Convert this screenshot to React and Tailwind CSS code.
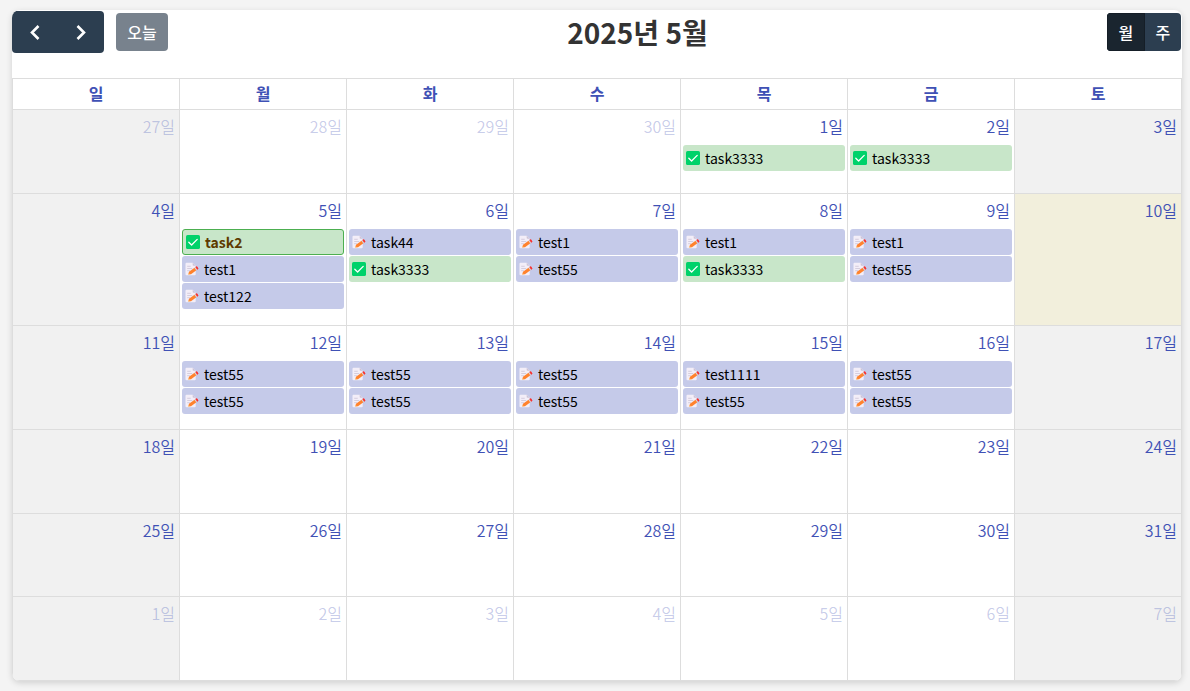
import React from "react";

const DAYS = ["일", "월", "화", "수", "목", "금", "토"];

const todo = (title) => ({ title, done: false });
const done = (title) => ({ title, done: true });

const WEEKS = [
  [
    { d: 27, other: true },
    { d: 28, other: true },
    { d: 29, other: true },
    { d: 30, other: true },
    { d: 1, events: [done("task3333")] },
    { d: 2, events: [done("task3333")] },
    { d: 3 },
  ],
  [
    { d: 4 },
    { d: 5, events: [{ title: "task2", done: true, selected: true }, todo("test1"), todo("test122")] },
    { d: 6, events: [todo("task44"), done("task3333")] },
    { d: 7, events: [todo("test1"), todo("test55")] },
    { d: 8, events: [todo("test1"), done("task3333")] },
    { d: 9, events: [todo("test1"), todo("test55")] },
    { d: 10, today: true },
  ],
  [
    { d: 11 },
    { d: 12, events: [todo("test55"), todo("test55")] },
    { d: 13, events: [todo("test55"), todo("test55")] },
    { d: 14, events: [todo("test55"), todo("test55")] },
    { d: 15, events: [todo("test1111"), todo("test55")] },
    { d: 16, events: [todo("test55"), todo("test55")] },
    { d: 17 },
  ],
  [18, 19, 20, 21, 22, 23, 24].map((d) => ({ d })),
  [25, 26, 27, 28, 29, 30, 31].map((d) => ({ d })),
  [1, 2, 3, 4, 5, 6, 7].map((d) => ({ d, other: true })),
];

function CheckIcon() {
  return (
    <svg viewBox="0 0 14 14" className="size-3.5 shrink-0" aria-hidden="true">
      <rect width="14" height="14" rx="1.6" fill="#00d26a" />
      <path d="M2.800 7.200 5.600 10 11.200 4.400" fill="none" stroke="#fff" strokeWidth="1.3" strokeLinecap="round" strokeLinejoin="round" />
    </svg>
  );
}

function MemoIcon() {
  return (
    <svg viewBox="0 0 14 14" className="size-3.5 shrink-0" aria-hidden="true">
      <path d="M1.500.8h6.200l3 3v8.400a1 1 0 0 1-1 1H1.500a1 1 0 0 1-1-1V1.800a1 1 0 0 1 1-1Z" fill="#f3eef8" />
      <path d="M7.700.8l3 3h-2.200a.8.8 0 0 1-.8-.8Z" fill="#cdc4d6" />
      <path d="M2.200 4.300h3.500M2.200 6.500h5M2.200 8.700h3" stroke="#cdc4d6" strokeWidth=".8" />
      <path d="M3.200 12.500 4 9.800 9.500 5.700 11.400 8.300 6 12.200Z" fill="#ff822d" />
      <path d="M3.200 12.500 3.700 10.900 4.900 12.400Z" fill="#ffce7c" />
      <path d="M9.500 5.700 10.300 5.100 12.200 7.700 11.400 8.300Z" fill="#d3d3d3" />
      <path d="M10.300 5.100 11 4.600a1 1 0 0 1 1.400.2l.8 1.100a1 1 0 0 1-.2 1.400L12.200 7.700Z" fill="#f8312f" />
    </svg>
  );
}

function Event({ event }) {
  const tone = event.selected
    ? "border border-[#4caf50] bg-[#c8e6c9] font-bold text-[#5d3a00]"
    : event.done
      ? "bg-[#c8e6c9] text-black"
      : "bg-[#c5cae9] text-black";
  return (
    <li className={`flex h-[26px] items-center gap-[5px] overflow-hidden rounded-[3px] px-[3px] text-sm leading-4 whitespace-nowrap ${tone}`}>
      {event.done ? <CheckIcon /> : <MemoIcon />}
      <span>{event.title}</span>
    </li>
  );
}

function DayCell({ day, weekend }) {
  const bg = day.today ? "bg-[#f2efdc]" : weekend ? "bg-[#f1f1f1]" : "bg-white";
  return (
    <td className={`h-[83px] border border-[#dddddd] p-0 align-top ${bg}`}>
      <div className="flex h-[35px] justify-end px-1 pt-1">
        <a href="#day" className={`text-base font-[350] ${day.other ? "text-[#3f51b5]/30" : "text-[#3f51b5]"}`}>
          {day.d}일
        </a>
      </div>
      {day.events && (
        <ul className="flex flex-col gap-px px-0.5 pb-[15px]">
          {day.events.map((event, i) => (
            <Event key={i} event={event} />
          ))}
        </ul>
      )}
    </td>
  );
}

function Toolbar() {
  return (
    <header className="mb-6 flex h-11 items-center justify-between">
      <div className="flex items-center gap-3">
        <div className="flex h-[42px] overflow-hidden rounded bg-[#2c3e50] text-white">
          <button type="button" aria-label="이전 달" className="flex w-[46px] items-center justify-center">
            <svg viewBox="0 0 24 24" className="size-6" fill="none" stroke="currentColor" strokeWidth="2.6" aria-hidden="true">
              <path d="m15.500 6-6.500 6.500 6.500 6.500" />
            </svg>
          </button>
          <button type="button" aria-label="다음 달" className="flex w-[46px] items-center justify-center">
            <svg viewBox="0 0 24 24" className="size-6" fill="none" stroke="currentColor" strokeWidth="2.6" aria-hidden="true">
              <path d="m8.500 6 6.500 6.500-6.500 6.500" />
            </svg>
          </button>
        </div>
        <button type="button" disabled className="h-[38px] w-[52px] rounded bg-[#78828d] text-base font-medium text-white">
          오늘
        </button>
      </div>
      <h1 className="text-[28px] font-bold text-[#333333]">2025년 5월</h1>
      <div className="mr-px flex h-[38px] overflow-hidden rounded bg-[#2c3e50] text-base font-medium text-white">
        <button type="button" aria-pressed="true" className="w-[38px] border border-[#151e27] bg-[#1a252f]">
          월
        </button>
        <button type="button" aria-pressed="false" className="w-9">
          주
        </button>
      </div>
    </header>
  );
}

export default function App() {
  return (
    <div className="min-h-screen bg-[#f4f4f4] px-3 pt-2.5 pr-2 pb-2.5 font-['Noto_Sans_CJK_KR',sans-serif]">
      <main className="overflow-hidden rounded-lg bg-white shadow-[0_2px_6px_rgba(0,0,0,0.15)]">
        <Toolbar />
        <table className="h-[603px] w-full table-fixed border-collapse">
          <thead>
            <tr>
              {DAYS.map((name) => (
                <th key={name} scope="col" className="h-[31px] border border-[#dddddd] px-0 pt-0 pb-0.5 text-base leading-6 font-bold text-[#3f51b5]">
                  {name}
                </th>
              ))}
            </tr>
          </thead>
          <tbody>
            {WEEKS.map((week, w) => (
              <tr key={w}>
                {week.map((day, i) => (
                  <DayCell key={i} day={day} weekend={i === 0 || i === 6} />
                ))}
              </tr>
            ))}
          </tbody>
        </table>
      </main>
    </div>
  );
}
